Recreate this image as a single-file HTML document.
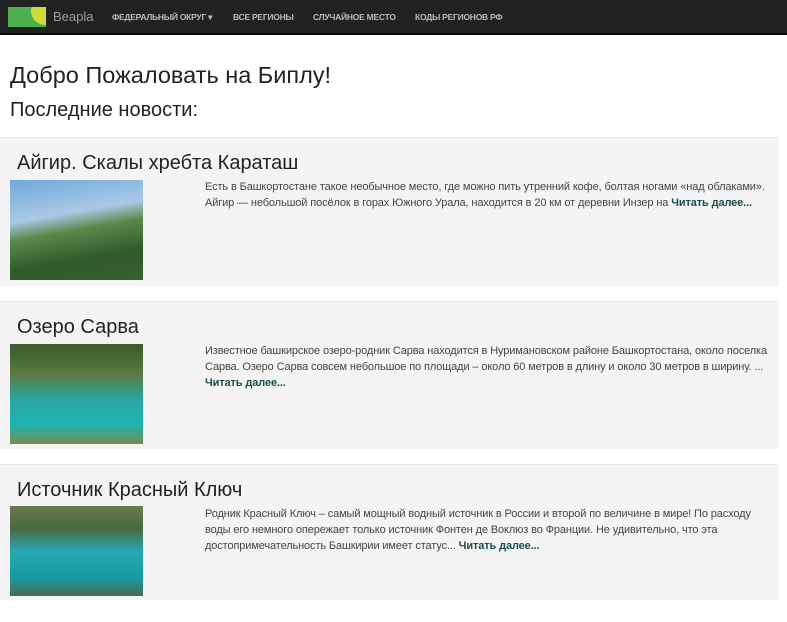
<!DOCTYPE html>
<html><head><meta charset="utf-8"><style>
*{margin:0;padding:0;box-sizing:border-box}
body{width:787px;height:622px;background:#fff;font-family:"Liberation Sans",sans-serif;overflow:hidden;position:relative}
.nav{position:absolute;left:0;top:0;width:787px;height:35px;background:#222;border-bottom:2px solid #080808}
.logo{position:absolute;left:8px;top:7px;width:38px;height:20px;background:#4caf50;overflow:hidden}
.logo:after{content:"";position:absolute;left:23px;top:-10px;width:28px;height:28px;border-radius:50%;background:#cddc39}
.brand{position:absolute;left:53px;top:9px;color:#9d9d9d;font-size:13px}
.nl{position:absolute;top:12px;color:#bbb;font-size:8.5px;font-weight:bold;letter-spacing:-.25px}
h1{position:absolute;left:10px;top:62px;font-size:23.5px;font-weight:normal;color:#222}
h2{position:absolute;left:10px;top:99px;font-size:20px;font-weight:normal;color:#222}
.p{position:absolute;left:0;width:779px;background:#f4f4f4;border-top:1px solid #e8e8e8}
.p h3{position:absolute;left:17px;top:14px;font-size:20px;font-weight:normal;color:#222}
.img{position:absolute;left:10px;width:133px;height:100px}
.t{position:absolute;left:205px;right:10px;font-size:11px;line-height:16px;color:#444;letter-spacing:-.12px}
.t b{color:#1a4d4d}
</style></head><body>
<div class="nav"><div class="logo"></div><div class="brand">Beapla</div>
<div class="nl" style="left:112px">ФЕДЕРАЛЬНЫЙ ОКРУГ ▾</div>
<div class="nl" style="left:233px">ВСЕ РЕГИОНЫ</div>
<div class="nl" style="left:313px">СЛУЧАЙНОЕ МЕСТО</div>
<div class="nl" style="left:415px">КОДЫ РЕГИОНОВ РФ</div></div>
<h1>Добро Пожаловать на Биплу!</h1>
<h2>Последние новости:</h2>
<div class="p" style="top:137px;height:149px"><h3>Айгир. Скалы хребта Караташ</h3>
<div class="img" style="top:42px;background:linear-gradient(170deg,#6fa8dc 0%,#a9c9e6 35%,#5a8a4a 50%,#2f5a2a 75%,#3a5f30 100%)"></div>
<div class="t" style="top:41px">Есть в Башкортостане такое необычное место, где можно пить утренний кофе, болтая ногами «над облаками». Айгир — небольшой посёлок в горах Южного Урала, находится в 20 км от деревни Инзер на <b>Читать далее...</b></div></div>
<div class="p" style="top:301px;height:148px"><h3>Озеро Сарва</h3>
<div class="img" style="top:42px;background:linear-gradient(180deg,#3a5a2a 0%,#5a7a40 30%,#2aa5a0 55%,#1fb5b0 80%,#7a8a50 100%)"></div>
<div class="t" style="top:41px">Известное башкирское озеро-родник Сарва находится в Нуримановском районе Башкортостана, около поселка Сарва. Озеро Сарва совсем небольшое по площади – около 60 метров в длину и около 30 метров в ширину. ... <b>Читать далее...</b></div></div>
<div class="p" style="top:464px;height:136px"><h3>Источник Красный Ключ</h3>
<div class="img" style="top:41px;height:90px;background:linear-gradient(180deg,#6a7a50 0%,#4a6a40 25%,#28a8b0 50%,#1a9aa0 80%,#4a6a50 100%)"></div>
<div class="t" style="top:41px">Родник Красный Ключ – самый мощный водный источник в России и второй по величине в мире! По расходу воды его немного опережает только источник Фонтен де Воклюз во Франции. Не удивительно, что эта достопримечательность Башкирии имеет статус... <b>Читать далее...</b></div></div>
</body></html>
